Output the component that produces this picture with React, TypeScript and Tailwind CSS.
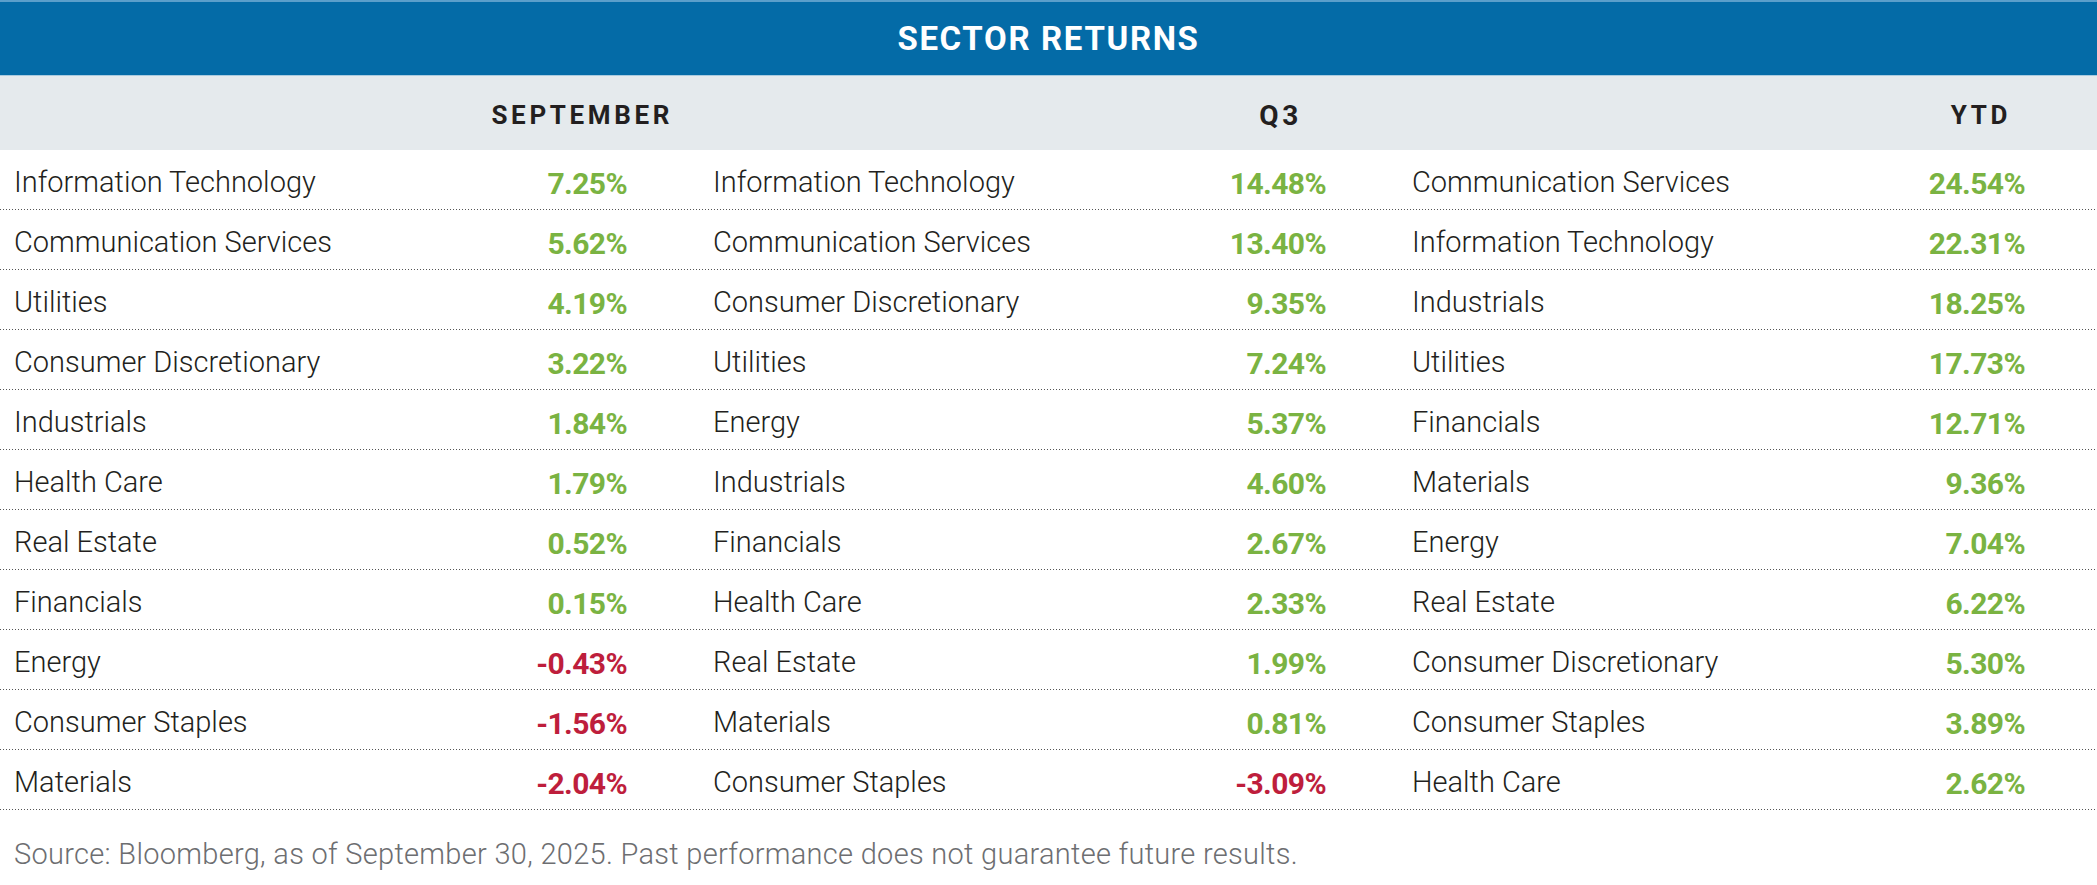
const september: [string, string][] = [
  ["Information Technology", "7.25%"],
  ["Communication Services", "5.62%"],
  ["Utilities", "4.19%"],
  ["Consumer Discretionary", "3.22%"],
  ["Industrials", "1.84%"],
  ["Health Care", "1.79%"],
  ["Real Estate", "0.52%"],
  ["Financials", "0.15%"],
  ["Energy", "-0.43%"],
  ["Consumer Staples", "-1.56%"],
  ["Materials", "-2.04%"],
];

const q3: [string, string][] = [
  ["Information Technology", "14.48%"],
  ["Communication Services", "13.40%"],
  ["Consumer Discretionary", "9.35%"],
  ["Utilities", "7.24%"],
  ["Energy", "5.37%"],
  ["Industrials", "4.60%"],
  ["Financials", "2.67%"],
  ["Health Care", "2.33%"],
  ["Real Estate", "1.99%"],
  ["Materials", "0.81%"],
  ["Consumer Staples", "-3.09%"],
];

const ytd: [string, string][] = [
  ["Communication Services", "24.54%"],
  ["Information Technology", "22.31%"],
  ["Industrials", "18.25%"],
  ["Utilities", "17.73%"],
  ["Financials", "12.71%"],
  ["Materials", "9.36%"],
  ["Energy", "7.04%"],
  ["Real Estate", "6.22%"],
  ["Consumer Discretionary", "5.30%"],
  ["Consumer Staples", "3.89%"],
  ["Health Care", "2.62%"],
];

function Cell({ item }: { item: [string, string] }) {
  const negative = item[1].startsWith("-");
  return (
    <div className="flex items-center justify-between pl-[14px] pr-[72px]">
      <span className="text-[29px] font-light text-[#231f20]">{item[0]}</span>
      <span
        className={
          negative
            ? "text-[30px] font-bold tracking-[-0.02em] text-[#be1e3c]"
            : "text-[30px] font-bold tracking-[-0.02em] text-[#7ab342]"
        }
      >
        {item[1]}
      </span>
    </div>
  );
}

export default function App() {
  return (
    <div className="w-[2097px] bg-white font-['Roboto',sans-serif]">
      <div className="flex h-[75px] items-center justify-center border-t-2 border-[#5b9fcb] bg-[#046ba7]">
        <h1 className="text-[33px] font-bold tracking-[0.05em] text-white">SECTOR RETURNS</h1>
      </div>
      <div className="grid h-[75px] grid-cols-3 items-center border-t border-[#a9cbe0] bg-[#e5eaed] pt-[5px] text-[26px] font-bold tracking-[0.14em] text-[#231f20]">
        <div className="pr-[26px] text-right">SEPTEMBER</div>
        <div className="pr-[96px] text-right text-[28px]">Q3</div>
        <div className="pr-[86px] text-right">YTD</div>
      </div>
      {september.map((row, i) => (
        <div key={i} className="relative grid h-[60px] grid-cols-3 pt-[6px]">
          <Cell item={row} />
          <Cell item={q3[i]} />
          <Cell item={ytd[i]} />
          <div className="absolute bottom-0 left-0 h-px w-full bg-[linear-gradient(to_right,#555_1px,transparent_1px)] bg-[length:3px_1px]" />
        </div>
      ))}
      <p className="pl-[14px] pt-[23px] text-[29px] font-light tracking-[0.01em] text-[#6d6e71]">
        Source: Bloomberg, as of September 30, 2025. Past performance does not guarantee future results.
      </p>
    </div>
  );
}
